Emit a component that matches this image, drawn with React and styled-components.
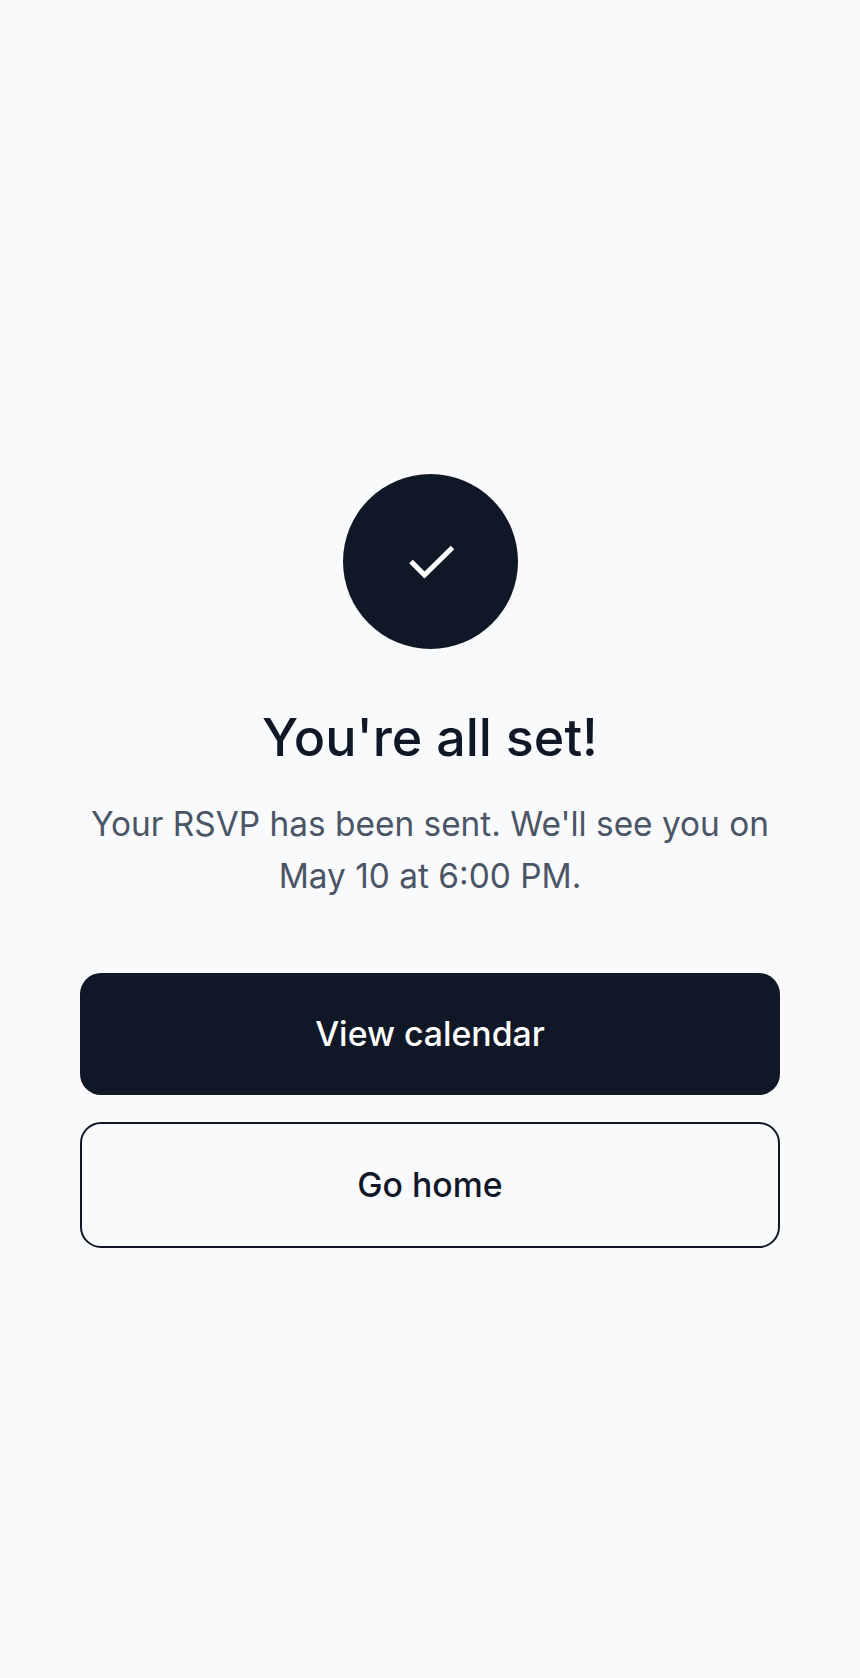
import React from "react";
import styled, { createGlobalStyle } from "styled-components";

const Global = createGlobalStyle`
  html, body { margin: 0; padding: 0; background: #f9fafb; }
  * { box-sizing: border-box; }
`;

const Page = styled.main`
  min-height: 1678px;
  padding: 474px 80px 0;
  display: flex;
  flex-direction: column;
  align-items: center;
  background: #f9fafb;
  font-family: Inter, "Liberation Sans", sans-serif;
`;

const Badge = styled.div`
  width: 175px;
  height: 175px;
  border-radius: 50%;
  background: #101828;
  display: flex;
  align-items: center;
  justify-content: center;
`;

const Check = styled.svg`
  margin-left: 4px;
`;

const Title = styled.h1`
  margin: 54px 0 0;
  font-size: 52px;
  line-height: 70px;
  font-weight: 500;
  color: #101828;
  text-align: center;
`;

const Message = styled.p`
  margin: 25px 0 0;
  font-size: 33.4px;
  line-height: 52px;
  font-weight: 400;
  color: #4a5565;
  text-align: center;
`;

const Actions = styled.div`
  align-self: stretch;
  margin-top: 71px;
  display: flex;
  flex-direction: column;
  gap: 27px;
`;

const Button = styled.button`
  width: 100%;
  height: ${(p) => (p.$outline ? 126 : 122)}px;
  border-radius: 21px;
  border: ${(p) => (p.$outline ? "2px solid #101828" : "none")};
  background: ${(p) => (p.$outline ? "transparent" : "#101828")};
  color: ${(p) => (p.$outline ? "#101828" : "#ffffff")};
  font-family: inherit;
  font-size: 33.8px;
  font-weight: 500;
  padding: 0 0 2px;
`;

export default function App() {
  return (
    <>
      <Global />
      <Page>
        <Badge>
          <Check width="48" height="36" viewBox="0 0 48 36" fill="none">
            <path d="M3 17.5 L16.5 31 L44.5 3.5" stroke="#fff" strokeWidth="5" />
          </Check>
        </Badge>
        <Title>You're all set!</Title>
        <Message>
          Your RSVP has been sent. We'll see you on
          <br />
          May 10 at 6:00 PM.
        </Message>
        <Actions>
          <Button>View calendar</Button>
          <Button $outline>Go home</Button>
        </Actions>
      </Page>
    </>
  );
}
